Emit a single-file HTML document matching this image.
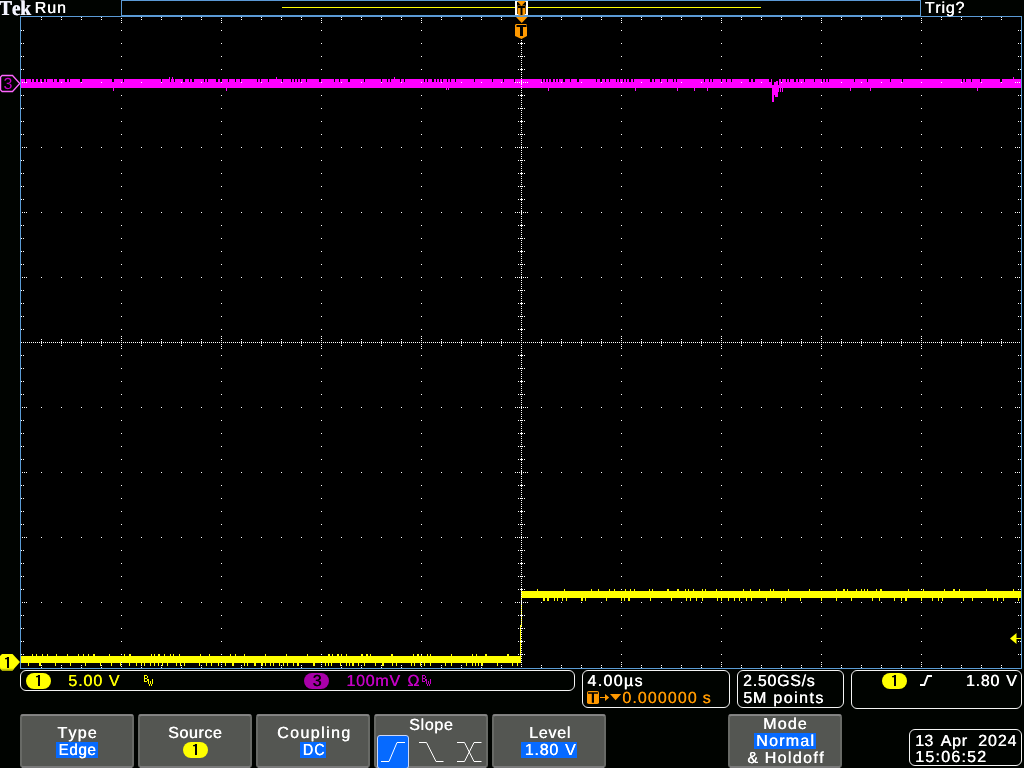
<!DOCTYPE html>
<html><head><meta charset="utf-8"><title>Tek</title>
<style>
html,body{margin:0;padding:0;background:#000300;width:1024px;height:768px;overflow:hidden}
svg{position:absolute;left:0;top:0;display:block}
#a{will-change:transform}
text{font-family:"Liberation Sans",sans-serif;font-kerning:none;white-space:pre;text-rendering:geometricPrecision}
</style></head><body>
<svg id="p" width="1024" height="768" viewBox="0 0 1024 768" shape-rendering="crispEdges">
<rect x="21" y="17" width="1000" height="651" fill="#000"/>
<rect x="21" y="82" width="1000" height="6" fill="#ff00ff"/>
<path fill="#ff00ff" d="M21 79h4v3h-4zM26 79h5v3h-5zM32 79h2v3h-2zM36 79h2v3h-2zM40 79h2v3h-2zM44 79h2v3h-2zM47 79h6v3h-6zM54 79h3v3h-3zM59 79h6v3h-6zM67 79h2v3h-2zM70 79h10v3h-10zM82 79h30v3h-30zM114 79h9v3h-9zM124 79h37v3h-37zM162 79h8v3h-8zM171 79h3v3h-3zM175 79h8v3h-8zM185 79h4v3h-4zM190 79h2v3h-2zM194 79h10v3h-10zM205 79h2v3h-2zM208 79h8v3h-8zM218 79h2v3h-2zM222 79h6v3h-6zM229 79h6v3h-6zM236 79h4v3h-4zM241 79h16v3h-16zM258 79h2v3h-2zM261 79h7v3h-7zM269 79h13v3h-13zM283 79h8v3h-8zM292 79h2v3h-2zM295 79h2v3h-2zM298 79h2v3h-2zM301 79h5v3h-5zM307 79h12v3h-12zM321 79h13v3h-13zM335 79h4v3h-4zM340 79h8v3h-8zM350 79h14v3h-14zM365 79h16v3h-16zM382 79h5v3h-5zM388 79h2v3h-2zM391 79h9v3h-9zM401 79h3v3h-3zM405 79h19v3h-19zM425 79h2v3h-2zM428 79h4v3h-4zM434 79h2v3h-2zM437 79h2v3h-2zM440 79h2v3h-2zM443 79h4v3h-4zM448 79h2v3h-2zM451 79h4v3h-4zM456 79h18v3h-18zM475 79h17v3h-17zM493 79h10v3h-10zM504 79h10v3h-10zM515 79h27v3h-27zM543 79h2v3h-2zM546 79h2v3h-2zM549 79h2v3h-2zM553 79h2v3h-2zM556 79h2v3h-2zM559 79h4v3h-4zM565 79h5v3h-5zM571 79h6v3h-6zM579 79h17v3h-17zM597 79h3v3h-3zM602 79h3v3h-3zM606 79h3v3h-3zM610 79h6v3h-6zM617 79h2v3h-2zM620 79h3v3h-3zM624 79h2v3h-2zM627 79h2v3h-2zM631 79h2v3h-2zM634 79h16v3h-16zM652 79h2v3h-2zM655 79h5v3h-5zM661 79h6v3h-6zM668 79h5v3h-5zM674 79h2v3h-2zM677 79h27v3h-27zM705 79h4v3h-4zM710 79h2v3h-2zM713 79h8v3h-8zM722 79h4v3h-4zM727 79h4v3h-4zM732 79h17v3h-17zM751 79h2v3h-2zM755 79h14v3h-14zM771 79h2v3h-2zM774 79h7v3h-7zM782 79h4v3h-4zM787 79h2v3h-2zM790 79h4v3h-4zM796 79h2v3h-2zM799 79h5v3h-5zM805 79h9v3h-9zM815 79h7v3h-7zM823 79h2v3h-2zM826 79h2v3h-2zM829 79h25v3h-25zM855 79h12v3h-12zM868 79h22v3h-22zM891 79h11v3h-11zM903 79h59v3h-59zM963 79h2v3h-2zM966 79h5v3h-5zM972 79h8v3h-8zM981 79h19v3h-19zM1002 79h19v3h-19z"/>
<rect x="169" y="77" width="1" height="2" fill="#ff00ff"/>
<rect x="172" y="77" width="1" height="2" fill="#ff00ff"/>
<rect x="276" y="77" width="1" height="2" fill="#ff00ff"/>
<rect x="394" y="77" width="1" height="2" fill="#ff00ff"/>
<rect x="1013" y="77" width="1" height="2" fill="#ff00ff"/>
<rect x="113" y="88" width="1" height="3" fill="#ff00ff"/>
<rect x="226" y="88" width="1" height="3" fill="#ff00ff"/>
<rect x="446" y="88" width="1" height="2" fill="#ff00ff"/>
<rect x="448" y="88" width="1" height="2" fill="#ff00ff"/>
<rect x="548" y="88" width="1" height="3" fill="#ff00ff"/>
<rect x="635" y="88" width="1" height="3" fill="#ff00ff"/>
<rect x="677" y="88" width="1" height="3" fill="#ff00ff"/>
<rect x="694" y="88" width="1" height="3" fill="#ff00ff"/>
<rect x="707" y="88" width="1" height="3" fill="#ff00ff"/>
<rect x="850" y="88" width="1" height="3" fill="#ff00ff"/>
<rect x="870" y="88" width="1" height="3" fill="#ff00ff"/>
<rect x="977" y="88" width="1" height="3" fill="#ff00ff"/>
<rect x="772" y="79" width="7" height="6" fill="#000"/>
<rect x="774" y="82" width="2" height="3" fill="#ff00ff"/>
<rect x="776" y="81" width="2" height="4" fill="#ff00ff"/>
<rect x="772" y="85" width="2" height="17" fill="#ff00ff"/>
<rect x="774" y="85" width="1" height="10" fill="#ff00ff"/>
<rect x="775" y="85" width="3" height="12" fill="#ff00ff"/>
<rect x="778" y="85" width="1" height="7" fill="#ff00ff"/>
<rect x="780" y="88" width="1" height="4" fill="#ff00ff"/>
<rect x="782" y="88" width="1" height="4" fill="#ff00ff"/>
<rect x="21" y="656" width="500" height="7" fill="#ffff00"/>
<rect x="521" y="591" width="500" height="7" fill="#ffff00"/>
<rect x="520" y="625" width="1" height="32" fill="#ffff00"/>
<rect x="521" y="598" width="1" height="28" fill="#ffff00"/>
<path fill="#ffff00" d="M32 654h1v2h-1zM36 654h1v2h-1zM42 654h1v2h-1zM47 654h1v2h-1zM56 654h1v2h-1zM67 654h1v2h-1zM78 654h1v2h-1zM83 654h1v2h-1zM88 654h1v2h-1zM93 654h2v2h-2zM109 654h1v2h-1zM124 654h1v2h-1zM129 654h2v2h-2zM151 654h1v2h-1zM154 654h1v2h-1zM158 654h2v2h-2zM164 654h1v2h-1zM170 654h1v2h-1zM173 654h1v2h-1zM179 654h1v2h-1zM200 654h1v2h-1zM209 654h1v2h-1zM230 654h1v2h-1zM235 654h1v2h-1zM244 654h1v2h-1zM265 654h1v2h-1zM286 654h1v2h-1zM307 654h1v2h-1zM328 654h2v2h-2zM332 654h1v2h-1zM337 654h2v2h-2zM341 654h1v2h-1zM346 654h1v2h-1zM361 654h2v2h-2zM366 654h2v2h-2zM370 654h1v2h-1zM391 654h2v2h-2zM413 654h1v2h-1zM417 654h2v2h-2zM421 654h1v2h-1zM427 654h1v2h-1zM430 654h1v2h-1zM451 654h1v2h-1zM472 654h1v2h-1zM476 654h1v2h-1zM485 654h2v2h-2zM507 654h2v2h-2z"/>
<path fill="#ffff00" d="M28 663h1v3h-1zM39 663h2v3h-2zM55 663h1v3h-1zM70 663h1v3h-1zM85 663h1v3h-1zM100 663h1v3h-1zM111 663h1v3h-1zM120 663h1v3h-1zM129 663h1v3h-1zM136 663h1v3h-1zM141 663h1v3h-1zM144 663h1v3h-1zM150 663h1v3h-1zM154 663h1v3h-1zM158 663h1v3h-1zM162 663h1v3h-1zM167 663h1v3h-1zM176 663h1v3h-1zM180 663h1v3h-1zM184 663h1v3h-1zM199 663h1v3h-1zM206 663h1v3h-1zM211 663h1v3h-1zM218 663h1v3h-1zM225 663h1v3h-1zM232 663h2v3h-2zM244 663h1v3h-1zM247 663h1v3h-1zM254 663h2v3h-2zM261 663h2v3h-2zM265 663h1v3h-1zM270 663h1v3h-1zM273 663h1v3h-1zM279 663h1v3h-1zM283 663h1v3h-1zM287 663h1v3h-1zM293 663h1v3h-1zM297 663h2v3h-2zM313 663h2v3h-2zM325 663h1v3h-1zM328 663h1v3h-1zM331 663h1v3h-1zM340 663h1v3h-1zM346 663h1v3h-1zM349 663h1v3h-1zM352 663h2v3h-2zM358 663h1v3h-1zM364 663h1v3h-1zM375 663h1v3h-1zM382 663h2v3h-2zM392 663h1v3h-1zM396 663h1v3h-1zM411 663h1v3h-1zM414 663h1v3h-1zM420 663h1v3h-1zM424 663h1v3h-1zM430 663h1v3h-1zM445 663h1v3h-1zM451 663h1v3h-1zM466 663h1v3h-1zM472 663h1v3h-1zM475 663h1v3h-1zM478 663h1v3h-1zM481 663h2v3h-2zM497 663h1v3h-1zM512 663h1v3h-1zM517 663h1v3h-1z"/>
<path fill="#ffff00" d="M537 589h1v2h-1zM564 589h1v2h-1zM591 589h1v2h-1zM598 589h1v2h-1zM609 589h1v2h-1zM614 589h1v2h-1zM625 589h1v2h-1zM630 589h1v2h-1zM634 589h1v2h-1zM649 589h1v2h-1zM652 589h1v2h-1zM667 589h2v2h-2zM677 589h2v2h-2zM685 589h1v2h-1zM688 589h1v2h-1zM693 589h1v2h-1zM702 589h1v2h-1zM705 589h1v2h-1zM716 589h1v2h-1zM743 589h1v2h-1zM750 589h1v2h-1zM759 589h1v2h-1zM770 589h1v2h-1zM773 589h1v2h-1zM788 589h1v2h-1zM809 589h1v2h-1zM836 589h1v2h-1zM843 589h2v2h-2zM847 589h1v2h-1zM856 589h1v2h-1zM861 589h1v2h-1zM864 589h1v2h-1zM867 589h1v2h-1zM876 589h1v2h-1zM880 589h2v2h-2zM908 589h1v2h-1zM923 589h1v2h-1zM944 589h1v2h-1zM953 589h2v2h-2zM959 589h1v2h-1zM986 589h1v2h-1zM1013 589h1v2h-1z"/>
<path fill="#ffff00" d="M543 598h2v3h-2zM547 598h2v3h-2zM554 598h1v3h-1zM557 598h1v3h-1zM562 598h1v3h-1zM566 598h1v3h-1zM581 598h2v3h-2zM585 598h1v3h-1zM606 598h1v3h-1zM621 598h1v3h-1zM624 598h1v3h-1zM628 598h2v3h-2zM650 598h1v3h-1zM671 598h1v3h-1zM686 598h1v3h-1zM690 598h1v3h-1zM696 598h1v3h-1zM702 598h1v3h-1zM717 598h1v3h-1zM721 598h1v3h-1zM728 598h1v3h-1zM734 598h1v3h-1zM739 598h1v3h-1zM746 598h1v3h-1zM751 598h1v3h-1zM766 598h1v3h-1zM781 598h1v3h-1zM785 598h1v3h-1zM800 598h1v3h-1zM821 598h1v3h-1zM836 598h1v3h-1zM851 598h1v3h-1zM872 598h1v3h-1zM879 598h1v3h-1zM894 598h1v3h-1zM901 598h1v3h-1zM905 598h2v3h-2zM921 598h1v3h-1zM932 598h1v3h-1zM938 598h1v3h-1zM942 598h1v3h-1zM963 598h1v3h-1zM972 598h1v3h-1zM993 598h1v3h-1zM997 598h1v3h-1zM1003 598h1v3h-1zM1018 598h1v3h-1z"/>
<path fill="#ffffff" d="M41 82h1v1h-1zM61 82h1v1h-1zM81 82h1v1h-1zM101 82h1v1h-1zM121 82h1v1h-1zM141 82h1v1h-1zM161 82h1v1h-1zM181 82h1v1h-1zM201 82h1v1h-1zM221 82h1v1h-1zM241 82h1v1h-1zM261 82h1v1h-1zM281 82h1v1h-1zM301 82h1v1h-1zM321 82h1v1h-1zM341 82h1v1h-1zM361 82h1v1h-1zM381 82h1v1h-1zM401 82h1v1h-1zM421 82h1v1h-1zM441 82h1v1h-1zM461 82h1v1h-1zM481 82h1v1h-1zM501 82h1v1h-1zM541 82h1v1h-1zM561 82h1v1h-1zM581 82h1v1h-1zM601 82h1v1h-1zM621 82h1v1h-1zM641 82h1v1h-1zM661 82h1v1h-1zM681 82h1v1h-1zM701 82h1v1h-1zM721 82h1v1h-1zM741 82h1v1h-1zM761 82h1v1h-1zM781 82h1v1h-1zM801 82h1v1h-1zM821 82h1v1h-1zM841 82h1v1h-1zM861 82h1v1h-1zM881 82h1v1h-1zM901 82h1v1h-1zM921 82h1v1h-1zM941 82h1v1h-1zM961 82h1v1h-1zM981 82h1v1h-1zM1001 82h1v1h-1zM22 82h1v1h-1zM24 82h1v1h-1zM26 82h1v1h-1zM1015 82h1v1h-1zM1017 82h1v1h-1zM1019 82h1v1h-1zM41 147h1v1h-1zM61 147h1v1h-1zM81 147h1v1h-1zM101 147h1v1h-1zM121 147h1v1h-1zM141 147h1v1h-1zM161 147h1v1h-1zM181 147h1v1h-1zM201 147h1v1h-1zM221 147h1v1h-1zM241 147h1v1h-1zM261 147h1v1h-1zM281 147h1v1h-1zM301 147h1v1h-1zM321 147h1v1h-1zM341 147h1v1h-1zM361 147h1v1h-1zM381 147h1v1h-1zM401 147h1v1h-1zM421 147h1v1h-1zM441 147h1v1h-1zM461 147h1v1h-1zM481 147h1v1h-1zM501 147h1v1h-1zM541 147h1v1h-1zM561 147h1v1h-1zM581 147h1v1h-1zM601 147h1v1h-1zM621 147h1v1h-1zM641 147h1v1h-1zM661 147h1v1h-1zM681 147h1v1h-1zM701 147h1v1h-1zM721 147h1v1h-1zM741 147h1v1h-1zM761 147h1v1h-1zM781 147h1v1h-1zM801 147h1v1h-1zM821 147h1v1h-1zM841 147h1v1h-1zM861 147h1v1h-1zM881 147h1v1h-1zM901 147h1v1h-1zM921 147h1v1h-1zM941 147h1v1h-1zM961 147h1v1h-1zM981 147h1v1h-1zM1001 147h1v1h-1zM22 147h1v1h-1zM24 147h1v1h-1zM26 147h1v1h-1zM1015 147h1v1h-1zM1017 147h1v1h-1zM1019 147h1v1h-1zM41 212h1v1h-1zM61 212h1v1h-1zM81 212h1v1h-1zM101 212h1v1h-1zM121 212h1v1h-1zM141 212h1v1h-1zM161 212h1v1h-1zM181 212h1v1h-1zM201 212h1v1h-1zM221 212h1v1h-1zM241 212h1v1h-1zM261 212h1v1h-1zM281 212h1v1h-1zM301 212h1v1h-1zM321 212h1v1h-1zM341 212h1v1h-1zM361 212h1v1h-1zM381 212h1v1h-1zM401 212h1v1h-1zM421 212h1v1h-1zM441 212h1v1h-1zM461 212h1v1h-1zM481 212h1v1h-1zM501 212h1v1h-1zM541 212h1v1h-1zM561 212h1v1h-1zM581 212h1v1h-1zM601 212h1v1h-1zM621 212h1v1h-1zM641 212h1v1h-1zM661 212h1v1h-1zM681 212h1v1h-1zM701 212h1v1h-1zM721 212h1v1h-1zM741 212h1v1h-1zM761 212h1v1h-1zM781 212h1v1h-1zM801 212h1v1h-1zM821 212h1v1h-1zM841 212h1v1h-1zM861 212h1v1h-1zM881 212h1v1h-1zM901 212h1v1h-1zM921 212h1v1h-1zM941 212h1v1h-1zM961 212h1v1h-1zM981 212h1v1h-1zM1001 212h1v1h-1zM22 212h1v1h-1zM24 212h1v1h-1zM26 212h1v1h-1zM1015 212h1v1h-1zM1017 212h1v1h-1zM1019 212h1v1h-1zM41 277h1v1h-1zM61 277h1v1h-1zM81 277h1v1h-1zM101 277h1v1h-1zM121 277h1v1h-1zM141 277h1v1h-1zM161 277h1v1h-1zM181 277h1v1h-1zM201 277h1v1h-1zM221 277h1v1h-1zM241 277h1v1h-1zM261 277h1v1h-1zM281 277h1v1h-1zM301 277h1v1h-1zM321 277h1v1h-1zM341 277h1v1h-1zM361 277h1v1h-1zM381 277h1v1h-1zM401 277h1v1h-1zM421 277h1v1h-1zM441 277h1v1h-1zM461 277h1v1h-1zM481 277h1v1h-1zM501 277h1v1h-1zM541 277h1v1h-1zM561 277h1v1h-1zM581 277h1v1h-1zM601 277h1v1h-1zM621 277h1v1h-1zM641 277h1v1h-1zM661 277h1v1h-1zM681 277h1v1h-1zM701 277h1v1h-1zM721 277h1v1h-1zM741 277h1v1h-1zM761 277h1v1h-1zM781 277h1v1h-1zM801 277h1v1h-1zM821 277h1v1h-1zM841 277h1v1h-1zM861 277h1v1h-1zM881 277h1v1h-1zM901 277h1v1h-1zM921 277h1v1h-1zM941 277h1v1h-1zM961 277h1v1h-1zM981 277h1v1h-1zM1001 277h1v1h-1zM22 277h1v1h-1zM24 277h1v1h-1zM26 277h1v1h-1zM1015 277h1v1h-1zM1017 277h1v1h-1zM1019 277h1v1h-1zM41 407h1v1h-1zM61 407h1v1h-1zM81 407h1v1h-1zM101 407h1v1h-1zM121 407h1v1h-1zM141 407h1v1h-1zM161 407h1v1h-1zM181 407h1v1h-1zM201 407h1v1h-1zM221 407h1v1h-1zM241 407h1v1h-1zM261 407h1v1h-1zM281 407h1v1h-1zM301 407h1v1h-1zM321 407h1v1h-1zM341 407h1v1h-1zM361 407h1v1h-1zM381 407h1v1h-1zM401 407h1v1h-1zM421 407h1v1h-1zM441 407h1v1h-1zM461 407h1v1h-1zM481 407h1v1h-1zM501 407h1v1h-1zM541 407h1v1h-1zM561 407h1v1h-1zM581 407h1v1h-1zM601 407h1v1h-1zM621 407h1v1h-1zM641 407h1v1h-1zM661 407h1v1h-1zM681 407h1v1h-1zM701 407h1v1h-1zM721 407h1v1h-1zM741 407h1v1h-1zM761 407h1v1h-1zM781 407h1v1h-1zM801 407h1v1h-1zM821 407h1v1h-1zM841 407h1v1h-1zM861 407h1v1h-1zM881 407h1v1h-1zM901 407h1v1h-1zM921 407h1v1h-1zM941 407h1v1h-1zM961 407h1v1h-1zM981 407h1v1h-1zM1001 407h1v1h-1zM22 407h1v1h-1zM24 407h1v1h-1zM26 407h1v1h-1zM1015 407h1v1h-1zM1017 407h1v1h-1zM1019 407h1v1h-1zM41 472h1v1h-1zM61 472h1v1h-1zM81 472h1v1h-1zM101 472h1v1h-1zM121 472h1v1h-1zM141 472h1v1h-1zM161 472h1v1h-1zM181 472h1v1h-1zM201 472h1v1h-1zM221 472h1v1h-1zM241 472h1v1h-1zM261 472h1v1h-1zM281 472h1v1h-1zM301 472h1v1h-1zM321 472h1v1h-1zM341 472h1v1h-1zM361 472h1v1h-1zM381 472h1v1h-1zM401 472h1v1h-1zM421 472h1v1h-1zM441 472h1v1h-1zM461 472h1v1h-1zM481 472h1v1h-1zM501 472h1v1h-1zM541 472h1v1h-1zM561 472h1v1h-1zM581 472h1v1h-1zM601 472h1v1h-1zM621 472h1v1h-1zM641 472h1v1h-1zM661 472h1v1h-1zM681 472h1v1h-1zM701 472h1v1h-1zM721 472h1v1h-1zM741 472h1v1h-1zM761 472h1v1h-1zM781 472h1v1h-1zM801 472h1v1h-1zM821 472h1v1h-1zM841 472h1v1h-1zM861 472h1v1h-1zM881 472h1v1h-1zM901 472h1v1h-1zM921 472h1v1h-1zM941 472h1v1h-1zM961 472h1v1h-1zM981 472h1v1h-1zM1001 472h1v1h-1zM22 472h1v1h-1zM24 472h1v1h-1zM26 472h1v1h-1zM1015 472h1v1h-1zM1017 472h1v1h-1zM1019 472h1v1h-1zM41 537h1v1h-1zM61 537h1v1h-1zM81 537h1v1h-1zM101 537h1v1h-1zM121 537h1v1h-1zM141 537h1v1h-1zM161 537h1v1h-1zM181 537h1v1h-1zM201 537h1v1h-1zM221 537h1v1h-1zM241 537h1v1h-1zM261 537h1v1h-1zM281 537h1v1h-1zM301 537h1v1h-1zM321 537h1v1h-1zM341 537h1v1h-1zM361 537h1v1h-1zM381 537h1v1h-1zM401 537h1v1h-1zM421 537h1v1h-1zM441 537h1v1h-1zM461 537h1v1h-1zM481 537h1v1h-1zM501 537h1v1h-1zM541 537h1v1h-1zM561 537h1v1h-1zM581 537h1v1h-1zM601 537h1v1h-1zM621 537h1v1h-1zM641 537h1v1h-1zM661 537h1v1h-1zM681 537h1v1h-1zM701 537h1v1h-1zM721 537h1v1h-1zM741 537h1v1h-1zM761 537h1v1h-1zM781 537h1v1h-1zM801 537h1v1h-1zM821 537h1v1h-1zM841 537h1v1h-1zM861 537h1v1h-1zM881 537h1v1h-1zM901 537h1v1h-1zM921 537h1v1h-1zM941 537h1v1h-1zM961 537h1v1h-1zM981 537h1v1h-1zM1001 537h1v1h-1zM22 537h1v1h-1zM24 537h1v1h-1zM26 537h1v1h-1zM1015 537h1v1h-1zM1017 537h1v1h-1zM1019 537h1v1h-1zM41 602h1v1h-1zM61 602h1v1h-1zM81 602h1v1h-1zM101 602h1v1h-1zM121 602h1v1h-1zM141 602h1v1h-1zM161 602h1v1h-1zM181 602h1v1h-1zM201 602h1v1h-1zM221 602h1v1h-1zM241 602h1v1h-1zM261 602h1v1h-1zM281 602h1v1h-1zM301 602h1v1h-1zM321 602h1v1h-1zM341 602h1v1h-1zM361 602h1v1h-1zM381 602h1v1h-1zM401 602h1v1h-1zM421 602h1v1h-1zM441 602h1v1h-1zM461 602h1v1h-1zM481 602h1v1h-1zM501 602h1v1h-1zM541 602h1v1h-1zM561 602h1v1h-1zM581 602h1v1h-1zM601 602h1v1h-1zM621 602h1v1h-1zM641 602h1v1h-1zM661 602h1v1h-1zM681 602h1v1h-1zM701 602h1v1h-1zM721 602h1v1h-1zM741 602h1v1h-1zM761 602h1v1h-1zM781 602h1v1h-1zM801 602h1v1h-1zM821 602h1v1h-1zM841 602h1v1h-1zM861 602h1v1h-1zM881 602h1v1h-1zM901 602h1v1h-1zM921 602h1v1h-1zM941 602h1v1h-1zM961 602h1v1h-1zM981 602h1v1h-1zM1001 602h1v1h-1zM22 602h1v1h-1zM24 602h1v1h-1zM26 602h1v1h-1zM1015 602h1v1h-1zM1017 602h1v1h-1zM1019 602h1v1h-1zM121 30h1v1h-1zM121 43h1v1h-1zM121 56h1v1h-1zM121 69h1v1h-1zM121 82h1v1h-1zM121 95h1v1h-1zM121 108h1v1h-1zM121 121h1v1h-1zM121 134h1v1h-1zM121 147h1v1h-1zM121 160h1v1h-1zM121 173h1v1h-1zM121 186h1v1h-1zM121 199h1v1h-1zM121 212h1v1h-1zM121 225h1v1h-1zM121 238h1v1h-1zM121 251h1v1h-1zM121 264h1v1h-1zM121 277h1v1h-1zM121 290h1v1h-1zM121 303h1v1h-1zM121 316h1v1h-1zM121 329h1v1h-1zM121 355h1v1h-1zM121 368h1v1h-1zM121 381h1v1h-1zM121 394h1v1h-1zM121 407h1v1h-1zM121 420h1v1h-1zM121 433h1v1h-1zM121 446h1v1h-1zM121 459h1v1h-1zM121 472h1v1h-1zM121 485h1v1h-1zM121 498h1v1h-1zM121 511h1v1h-1zM121 524h1v1h-1zM121 537h1v1h-1zM121 550h1v1h-1zM121 563h1v1h-1zM121 576h1v1h-1zM121 589h1v1h-1zM121 602h1v1h-1zM121 615h1v1h-1zM121 628h1v1h-1zM121 641h1v1h-1zM121 654h1v1h-1zM121 18h1v1h-1zM121 20h1v1h-1zM121 22h1v1h-1zM121 662h1v1h-1zM121 664h1v1h-1zM121 666h1v1h-1zM221 30h1v1h-1zM221 43h1v1h-1zM221 56h1v1h-1zM221 69h1v1h-1zM221 82h1v1h-1zM221 95h1v1h-1zM221 108h1v1h-1zM221 121h1v1h-1zM221 134h1v1h-1zM221 147h1v1h-1zM221 160h1v1h-1zM221 173h1v1h-1zM221 186h1v1h-1zM221 199h1v1h-1zM221 212h1v1h-1zM221 225h1v1h-1zM221 238h1v1h-1zM221 251h1v1h-1zM221 264h1v1h-1zM221 277h1v1h-1zM221 290h1v1h-1zM221 303h1v1h-1zM221 316h1v1h-1zM221 329h1v1h-1zM221 355h1v1h-1zM221 368h1v1h-1zM221 381h1v1h-1zM221 394h1v1h-1zM221 407h1v1h-1zM221 420h1v1h-1zM221 433h1v1h-1zM221 446h1v1h-1zM221 459h1v1h-1zM221 472h1v1h-1zM221 485h1v1h-1zM221 498h1v1h-1zM221 511h1v1h-1zM221 524h1v1h-1zM221 537h1v1h-1zM221 550h1v1h-1zM221 563h1v1h-1zM221 576h1v1h-1zM221 589h1v1h-1zM221 602h1v1h-1zM221 615h1v1h-1zM221 628h1v1h-1zM221 641h1v1h-1zM221 654h1v1h-1zM221 18h1v1h-1zM221 20h1v1h-1zM221 22h1v1h-1zM221 662h1v1h-1zM221 664h1v1h-1zM221 666h1v1h-1zM321 30h1v1h-1zM321 43h1v1h-1zM321 56h1v1h-1zM321 69h1v1h-1zM321 82h1v1h-1zM321 95h1v1h-1zM321 108h1v1h-1zM321 121h1v1h-1zM321 134h1v1h-1zM321 147h1v1h-1zM321 160h1v1h-1zM321 173h1v1h-1zM321 186h1v1h-1zM321 199h1v1h-1zM321 212h1v1h-1zM321 225h1v1h-1zM321 238h1v1h-1zM321 251h1v1h-1zM321 264h1v1h-1zM321 277h1v1h-1zM321 290h1v1h-1zM321 303h1v1h-1zM321 316h1v1h-1zM321 329h1v1h-1zM321 355h1v1h-1zM321 368h1v1h-1zM321 381h1v1h-1zM321 394h1v1h-1zM321 407h1v1h-1zM321 420h1v1h-1zM321 433h1v1h-1zM321 446h1v1h-1zM321 459h1v1h-1zM321 472h1v1h-1zM321 485h1v1h-1zM321 498h1v1h-1zM321 511h1v1h-1zM321 524h1v1h-1zM321 537h1v1h-1zM321 550h1v1h-1zM321 563h1v1h-1zM321 576h1v1h-1zM321 589h1v1h-1zM321 602h1v1h-1zM321 615h1v1h-1zM321 628h1v1h-1zM321 641h1v1h-1zM321 654h1v1h-1zM321 18h1v1h-1zM321 20h1v1h-1zM321 22h1v1h-1zM321 662h1v1h-1zM321 664h1v1h-1zM321 666h1v1h-1zM421 30h1v1h-1zM421 43h1v1h-1zM421 56h1v1h-1zM421 69h1v1h-1zM421 82h1v1h-1zM421 95h1v1h-1zM421 108h1v1h-1zM421 121h1v1h-1zM421 134h1v1h-1zM421 147h1v1h-1zM421 160h1v1h-1zM421 173h1v1h-1zM421 186h1v1h-1zM421 199h1v1h-1zM421 212h1v1h-1zM421 225h1v1h-1zM421 238h1v1h-1zM421 251h1v1h-1zM421 264h1v1h-1zM421 277h1v1h-1zM421 290h1v1h-1zM421 303h1v1h-1zM421 316h1v1h-1zM421 329h1v1h-1zM421 355h1v1h-1zM421 368h1v1h-1zM421 381h1v1h-1zM421 394h1v1h-1zM421 407h1v1h-1zM421 420h1v1h-1zM421 433h1v1h-1zM421 446h1v1h-1zM421 459h1v1h-1zM421 472h1v1h-1zM421 485h1v1h-1zM421 498h1v1h-1zM421 511h1v1h-1zM421 524h1v1h-1zM421 537h1v1h-1zM421 550h1v1h-1zM421 563h1v1h-1zM421 576h1v1h-1zM421 589h1v1h-1zM421 602h1v1h-1zM421 615h1v1h-1zM421 628h1v1h-1zM421 641h1v1h-1zM421 654h1v1h-1zM421 18h1v1h-1zM421 20h1v1h-1zM421 22h1v1h-1zM421 662h1v1h-1zM421 664h1v1h-1zM421 666h1v1h-1zM621 30h1v1h-1zM621 43h1v1h-1zM621 56h1v1h-1zM621 69h1v1h-1zM621 82h1v1h-1zM621 95h1v1h-1zM621 108h1v1h-1zM621 121h1v1h-1zM621 134h1v1h-1zM621 147h1v1h-1zM621 160h1v1h-1zM621 173h1v1h-1zM621 186h1v1h-1zM621 199h1v1h-1zM621 212h1v1h-1zM621 225h1v1h-1zM621 238h1v1h-1zM621 251h1v1h-1zM621 264h1v1h-1zM621 277h1v1h-1zM621 290h1v1h-1zM621 303h1v1h-1zM621 316h1v1h-1zM621 329h1v1h-1zM621 355h1v1h-1zM621 368h1v1h-1zM621 381h1v1h-1zM621 394h1v1h-1zM621 407h1v1h-1zM621 420h1v1h-1zM621 433h1v1h-1zM621 446h1v1h-1zM621 459h1v1h-1zM621 472h1v1h-1zM621 485h1v1h-1zM621 498h1v1h-1zM621 511h1v1h-1zM621 524h1v1h-1zM621 537h1v1h-1zM621 550h1v1h-1zM621 563h1v1h-1zM621 576h1v1h-1zM621 589h1v1h-1zM621 602h1v1h-1zM621 615h1v1h-1zM621 628h1v1h-1zM621 641h1v1h-1zM621 654h1v1h-1zM621 18h1v1h-1zM621 20h1v1h-1zM621 22h1v1h-1zM621 662h1v1h-1zM621 664h1v1h-1zM621 666h1v1h-1zM721 30h1v1h-1zM721 43h1v1h-1zM721 56h1v1h-1zM721 69h1v1h-1zM721 82h1v1h-1zM721 95h1v1h-1zM721 108h1v1h-1zM721 121h1v1h-1zM721 134h1v1h-1zM721 147h1v1h-1zM721 160h1v1h-1zM721 173h1v1h-1zM721 186h1v1h-1zM721 199h1v1h-1zM721 212h1v1h-1zM721 225h1v1h-1zM721 238h1v1h-1zM721 251h1v1h-1zM721 264h1v1h-1zM721 277h1v1h-1zM721 290h1v1h-1zM721 303h1v1h-1zM721 316h1v1h-1zM721 329h1v1h-1zM721 355h1v1h-1zM721 368h1v1h-1zM721 381h1v1h-1zM721 394h1v1h-1zM721 407h1v1h-1zM721 420h1v1h-1zM721 433h1v1h-1zM721 446h1v1h-1zM721 459h1v1h-1zM721 472h1v1h-1zM721 485h1v1h-1zM721 498h1v1h-1zM721 511h1v1h-1zM721 524h1v1h-1zM721 537h1v1h-1zM721 550h1v1h-1zM721 563h1v1h-1zM721 576h1v1h-1zM721 589h1v1h-1zM721 602h1v1h-1zM721 615h1v1h-1zM721 628h1v1h-1zM721 641h1v1h-1zM721 654h1v1h-1zM721 18h1v1h-1zM721 20h1v1h-1zM721 22h1v1h-1zM721 662h1v1h-1zM721 664h1v1h-1zM721 666h1v1h-1zM821 30h1v1h-1zM821 43h1v1h-1zM821 56h1v1h-1zM821 69h1v1h-1zM821 82h1v1h-1zM821 95h1v1h-1zM821 108h1v1h-1zM821 121h1v1h-1zM821 134h1v1h-1zM821 147h1v1h-1zM821 160h1v1h-1zM821 173h1v1h-1zM821 186h1v1h-1zM821 199h1v1h-1zM821 212h1v1h-1zM821 225h1v1h-1zM821 238h1v1h-1zM821 251h1v1h-1zM821 264h1v1h-1zM821 277h1v1h-1zM821 290h1v1h-1zM821 303h1v1h-1zM821 316h1v1h-1zM821 329h1v1h-1zM821 355h1v1h-1zM821 368h1v1h-1zM821 381h1v1h-1zM821 394h1v1h-1zM821 407h1v1h-1zM821 420h1v1h-1zM821 433h1v1h-1zM821 446h1v1h-1zM821 459h1v1h-1zM821 472h1v1h-1zM821 485h1v1h-1zM821 498h1v1h-1zM821 511h1v1h-1zM821 524h1v1h-1zM821 537h1v1h-1zM821 550h1v1h-1zM821 563h1v1h-1zM821 576h1v1h-1zM821 589h1v1h-1zM821 602h1v1h-1zM821 615h1v1h-1zM821 628h1v1h-1zM821 641h1v1h-1zM821 654h1v1h-1zM821 18h1v1h-1zM821 20h1v1h-1zM821 22h1v1h-1zM821 662h1v1h-1zM821 664h1v1h-1zM821 666h1v1h-1zM921 30h1v1h-1zM921 43h1v1h-1zM921 56h1v1h-1zM921 69h1v1h-1zM921 82h1v1h-1zM921 95h1v1h-1zM921 108h1v1h-1zM921 121h1v1h-1zM921 134h1v1h-1zM921 147h1v1h-1zM921 160h1v1h-1zM921 173h1v1h-1zM921 186h1v1h-1zM921 199h1v1h-1zM921 212h1v1h-1zM921 225h1v1h-1zM921 238h1v1h-1zM921 251h1v1h-1zM921 264h1v1h-1zM921 277h1v1h-1zM921 290h1v1h-1zM921 303h1v1h-1zM921 316h1v1h-1zM921 329h1v1h-1zM921 355h1v1h-1zM921 368h1v1h-1zM921 381h1v1h-1zM921 394h1v1h-1zM921 407h1v1h-1zM921 420h1v1h-1zM921 433h1v1h-1zM921 446h1v1h-1zM921 459h1v1h-1zM921 472h1v1h-1zM921 485h1v1h-1zM921 498h1v1h-1zM921 511h1v1h-1zM921 524h1v1h-1zM921 537h1v1h-1zM921 550h1v1h-1zM921 563h1v1h-1zM921 576h1v1h-1zM921 589h1v1h-1zM921 602h1v1h-1zM921 615h1v1h-1zM921 628h1v1h-1zM921 641h1v1h-1zM921 654h1v1h-1zM921 18h1v1h-1zM921 20h1v1h-1zM921 22h1v1h-1zM921 662h1v1h-1zM921 664h1v1h-1zM921 666h1v1h-1zM41 17h1v1h-1zM41 19h1v1h-1zM41 665h1v1h-1zM41 667h1v1h-1zM61 17h1v1h-1zM61 19h1v1h-1zM61 665h1v1h-1zM61 667h1v1h-1zM81 17h1v1h-1zM81 19h1v1h-1zM81 665h1v1h-1zM81 667h1v1h-1zM101 17h1v1h-1zM101 19h1v1h-1zM101 665h1v1h-1zM101 667h1v1h-1zM141 17h1v1h-1zM141 19h1v1h-1zM141 665h1v1h-1zM141 667h1v1h-1zM161 17h1v1h-1zM161 19h1v1h-1zM161 665h1v1h-1zM161 667h1v1h-1zM181 17h1v1h-1zM181 19h1v1h-1zM181 665h1v1h-1zM181 667h1v1h-1zM201 17h1v1h-1zM201 19h1v1h-1zM201 665h1v1h-1zM201 667h1v1h-1zM241 17h1v1h-1zM241 19h1v1h-1zM241 665h1v1h-1zM241 667h1v1h-1zM261 17h1v1h-1zM261 19h1v1h-1zM261 665h1v1h-1zM261 667h1v1h-1zM281 17h1v1h-1zM281 19h1v1h-1zM281 665h1v1h-1zM281 667h1v1h-1zM301 17h1v1h-1zM301 19h1v1h-1zM301 665h1v1h-1zM301 667h1v1h-1zM341 17h1v1h-1zM341 19h1v1h-1zM341 665h1v1h-1zM341 667h1v1h-1zM361 17h1v1h-1zM361 19h1v1h-1zM361 665h1v1h-1zM361 667h1v1h-1zM381 17h1v1h-1zM381 19h1v1h-1zM381 665h1v1h-1zM381 667h1v1h-1zM401 17h1v1h-1zM401 19h1v1h-1zM401 665h1v1h-1zM401 667h1v1h-1zM441 17h1v1h-1zM441 19h1v1h-1zM441 665h1v1h-1zM441 667h1v1h-1zM461 17h1v1h-1zM461 19h1v1h-1zM461 665h1v1h-1zM461 667h1v1h-1zM481 17h1v1h-1zM481 19h1v1h-1zM481 665h1v1h-1zM481 667h1v1h-1zM501 17h1v1h-1zM501 19h1v1h-1zM501 665h1v1h-1zM501 667h1v1h-1zM541 17h1v1h-1zM541 19h1v1h-1zM541 665h1v1h-1zM541 667h1v1h-1zM561 17h1v1h-1zM561 19h1v1h-1zM561 665h1v1h-1zM561 667h1v1h-1zM581 17h1v1h-1zM581 19h1v1h-1zM581 665h1v1h-1zM581 667h1v1h-1zM601 17h1v1h-1zM601 19h1v1h-1zM601 665h1v1h-1zM601 667h1v1h-1zM641 17h1v1h-1zM641 19h1v1h-1zM641 665h1v1h-1zM641 667h1v1h-1zM661 17h1v1h-1zM661 19h1v1h-1zM661 665h1v1h-1zM661 667h1v1h-1zM681 17h1v1h-1zM681 19h1v1h-1zM681 665h1v1h-1zM681 667h1v1h-1zM701 17h1v1h-1zM701 19h1v1h-1zM701 665h1v1h-1zM701 667h1v1h-1zM741 17h1v1h-1zM741 19h1v1h-1zM741 665h1v1h-1zM741 667h1v1h-1zM761 17h1v1h-1zM761 19h1v1h-1zM761 665h1v1h-1zM761 667h1v1h-1zM781 17h1v1h-1zM781 19h1v1h-1zM781 665h1v1h-1zM781 667h1v1h-1zM801 17h1v1h-1zM801 19h1v1h-1zM801 665h1v1h-1zM801 667h1v1h-1zM841 17h1v1h-1zM841 19h1v1h-1zM841 665h1v1h-1zM841 667h1v1h-1zM861 17h1v1h-1zM861 19h1v1h-1zM861 665h1v1h-1zM861 667h1v1h-1zM881 17h1v1h-1zM881 19h1v1h-1zM881 665h1v1h-1zM881 667h1v1h-1zM901 17h1v1h-1zM901 19h1v1h-1zM901 665h1v1h-1zM901 667h1v1h-1zM941 17h1v1h-1zM941 19h1v1h-1zM941 665h1v1h-1zM941 667h1v1h-1zM961 17h1v1h-1zM961 19h1v1h-1zM961 665h1v1h-1zM961 667h1v1h-1zM981 17h1v1h-1zM981 19h1v1h-1zM981 665h1v1h-1zM981 667h1v1h-1zM1001 17h1v1h-1zM1001 19h1v1h-1zM1001 665h1v1h-1zM1001 667h1v1h-1zM21 30h1v1h-1zM23 30h1v1h-1zM1018 30h1v1h-1zM1020 30h1v1h-1zM21 43h1v1h-1zM23 43h1v1h-1zM1018 43h1v1h-1zM1020 43h1v1h-1zM21 56h1v1h-1zM23 56h1v1h-1zM1018 56h1v1h-1zM1020 56h1v1h-1zM21 69h1v1h-1zM23 69h1v1h-1zM1018 69h1v1h-1zM1020 69h1v1h-1zM21 95h1v1h-1zM23 95h1v1h-1zM1018 95h1v1h-1zM1020 95h1v1h-1zM21 108h1v1h-1zM23 108h1v1h-1zM1018 108h1v1h-1zM1020 108h1v1h-1zM21 121h1v1h-1zM23 121h1v1h-1zM1018 121h1v1h-1zM1020 121h1v1h-1zM21 134h1v1h-1zM23 134h1v1h-1zM1018 134h1v1h-1zM1020 134h1v1h-1zM21 160h1v1h-1zM23 160h1v1h-1zM1018 160h1v1h-1zM1020 160h1v1h-1zM21 173h1v1h-1zM23 173h1v1h-1zM1018 173h1v1h-1zM1020 173h1v1h-1zM21 186h1v1h-1zM23 186h1v1h-1zM1018 186h1v1h-1zM1020 186h1v1h-1zM21 199h1v1h-1zM23 199h1v1h-1zM1018 199h1v1h-1zM1020 199h1v1h-1zM21 225h1v1h-1zM23 225h1v1h-1zM1018 225h1v1h-1zM1020 225h1v1h-1zM21 238h1v1h-1zM23 238h1v1h-1zM1018 238h1v1h-1zM1020 238h1v1h-1zM21 251h1v1h-1zM23 251h1v1h-1zM1018 251h1v1h-1zM1020 251h1v1h-1zM21 264h1v1h-1zM23 264h1v1h-1zM1018 264h1v1h-1zM1020 264h1v1h-1zM21 290h1v1h-1zM23 290h1v1h-1zM1018 290h1v1h-1zM1020 290h1v1h-1zM21 303h1v1h-1zM23 303h1v1h-1zM1018 303h1v1h-1zM1020 303h1v1h-1zM21 316h1v1h-1zM23 316h1v1h-1zM1018 316h1v1h-1zM1020 316h1v1h-1zM21 329h1v1h-1zM23 329h1v1h-1zM1018 329h1v1h-1zM1020 329h1v1h-1zM21 355h1v1h-1zM23 355h1v1h-1zM1018 355h1v1h-1zM1020 355h1v1h-1zM21 368h1v1h-1zM23 368h1v1h-1zM1018 368h1v1h-1zM1020 368h1v1h-1zM21 381h1v1h-1zM23 381h1v1h-1zM1018 381h1v1h-1zM1020 381h1v1h-1zM21 394h1v1h-1zM23 394h1v1h-1zM1018 394h1v1h-1zM1020 394h1v1h-1zM21 420h1v1h-1zM23 420h1v1h-1zM1018 420h1v1h-1zM1020 420h1v1h-1zM21 433h1v1h-1zM23 433h1v1h-1zM1018 433h1v1h-1zM1020 433h1v1h-1zM21 446h1v1h-1zM23 446h1v1h-1zM1018 446h1v1h-1zM1020 446h1v1h-1zM21 459h1v1h-1zM23 459h1v1h-1zM1018 459h1v1h-1zM1020 459h1v1h-1zM21 485h1v1h-1zM23 485h1v1h-1zM1018 485h1v1h-1zM1020 485h1v1h-1zM21 498h1v1h-1zM23 498h1v1h-1zM1018 498h1v1h-1zM1020 498h1v1h-1zM21 511h1v1h-1zM23 511h1v1h-1zM1018 511h1v1h-1zM1020 511h1v1h-1zM21 524h1v1h-1zM23 524h1v1h-1zM1018 524h1v1h-1zM1020 524h1v1h-1zM21 550h1v1h-1zM23 550h1v1h-1zM1018 550h1v1h-1zM1020 550h1v1h-1zM21 563h1v1h-1zM23 563h1v1h-1zM1018 563h1v1h-1zM1020 563h1v1h-1zM21 576h1v1h-1zM23 576h1v1h-1zM1018 576h1v1h-1zM1020 576h1v1h-1zM21 589h1v1h-1zM23 589h1v1h-1zM1018 589h1v1h-1zM1020 589h1v1h-1zM21 615h1v1h-1zM23 615h1v1h-1zM1018 615h1v1h-1zM1020 615h1v1h-1zM21 628h1v1h-1zM23 628h1v1h-1zM1018 628h1v1h-1zM1020 628h1v1h-1zM21 641h1v1h-1zM23 641h1v1h-1zM1018 641h1v1h-1zM1020 641h1v1h-1zM21 654h1v1h-1zM23 654h1v1h-1zM1018 654h1v1h-1zM1020 654h1v1h-1zM21 342h1v1h-1zM23 342h1v1h-1zM25 342h1v1h-1zM27 342h1v1h-1zM29 342h1v1h-1zM31 342h1v1h-1zM33 342h1v1h-1zM35 342h1v1h-1zM37 342h1v1h-1zM39 342h1v1h-1zM41 342h1v1h-1zM43 342h1v1h-1zM45 342h1v1h-1zM47 342h1v1h-1zM49 342h1v1h-1zM51 342h1v1h-1zM53 342h1v1h-1zM55 342h1v1h-1zM57 342h1v1h-1zM59 342h1v1h-1zM61 342h1v1h-1zM63 342h1v1h-1zM65 342h1v1h-1zM67 342h1v1h-1zM69 342h1v1h-1zM71 342h1v1h-1zM73 342h1v1h-1zM75 342h1v1h-1zM77 342h1v1h-1zM79 342h1v1h-1zM81 342h1v1h-1zM83 342h1v1h-1zM85 342h1v1h-1zM87 342h1v1h-1zM89 342h1v1h-1zM91 342h1v1h-1zM93 342h1v1h-1zM95 342h1v1h-1zM97 342h1v1h-1zM99 342h1v1h-1zM101 342h1v1h-1zM103 342h1v1h-1zM105 342h1v1h-1zM107 342h1v1h-1zM109 342h1v1h-1zM111 342h1v1h-1zM113 342h1v1h-1zM115 342h1v1h-1zM117 342h1v1h-1zM119 342h1v1h-1zM121 342h1v1h-1zM123 342h1v1h-1zM125 342h1v1h-1zM127 342h1v1h-1zM129 342h1v1h-1zM131 342h1v1h-1zM133 342h1v1h-1zM135 342h1v1h-1zM137 342h1v1h-1zM139 342h1v1h-1zM141 342h1v1h-1zM143 342h1v1h-1zM145 342h1v1h-1zM147 342h1v1h-1zM149 342h1v1h-1zM151 342h1v1h-1zM153 342h1v1h-1zM155 342h1v1h-1zM157 342h1v1h-1zM159 342h1v1h-1zM161 342h1v1h-1zM163 342h1v1h-1zM165 342h1v1h-1zM167 342h1v1h-1zM169 342h1v1h-1zM171 342h1v1h-1zM173 342h1v1h-1zM175 342h1v1h-1zM177 342h1v1h-1zM179 342h1v1h-1zM181 342h1v1h-1zM183 342h1v1h-1zM185 342h1v1h-1zM187 342h1v1h-1zM189 342h1v1h-1zM191 342h1v1h-1zM193 342h1v1h-1zM195 342h1v1h-1zM197 342h1v1h-1zM199 342h1v1h-1zM201 342h1v1h-1zM203 342h1v1h-1zM205 342h1v1h-1zM207 342h1v1h-1zM209 342h1v1h-1zM211 342h1v1h-1zM213 342h1v1h-1zM215 342h1v1h-1zM217 342h1v1h-1zM219 342h1v1h-1zM221 342h1v1h-1zM223 342h1v1h-1zM225 342h1v1h-1zM227 342h1v1h-1zM229 342h1v1h-1zM231 342h1v1h-1zM233 342h1v1h-1zM235 342h1v1h-1zM237 342h1v1h-1zM239 342h1v1h-1zM241 342h1v1h-1zM243 342h1v1h-1zM245 342h1v1h-1zM247 342h1v1h-1zM249 342h1v1h-1zM251 342h1v1h-1zM253 342h1v1h-1zM255 342h1v1h-1zM257 342h1v1h-1zM259 342h1v1h-1zM261 342h1v1h-1zM263 342h1v1h-1zM265 342h1v1h-1zM267 342h1v1h-1zM269 342h1v1h-1zM271 342h1v1h-1zM273 342h1v1h-1zM275 342h1v1h-1zM277 342h1v1h-1zM279 342h1v1h-1zM281 342h1v1h-1zM283 342h1v1h-1zM285 342h1v1h-1zM287 342h1v1h-1zM289 342h1v1h-1zM291 342h1v1h-1zM293 342h1v1h-1zM295 342h1v1h-1zM297 342h1v1h-1zM299 342h1v1h-1zM301 342h1v1h-1zM303 342h1v1h-1zM305 342h1v1h-1zM307 342h1v1h-1zM309 342h1v1h-1zM311 342h1v1h-1zM313 342h1v1h-1zM315 342h1v1h-1zM317 342h1v1h-1zM319 342h1v1h-1zM321 342h1v1h-1zM323 342h1v1h-1zM325 342h1v1h-1zM327 342h1v1h-1zM329 342h1v1h-1zM331 342h1v1h-1zM333 342h1v1h-1zM335 342h1v1h-1zM337 342h1v1h-1zM339 342h1v1h-1zM341 342h1v1h-1zM343 342h1v1h-1zM345 342h1v1h-1zM347 342h1v1h-1zM349 342h1v1h-1zM351 342h1v1h-1zM353 342h1v1h-1zM355 342h1v1h-1zM357 342h1v1h-1zM359 342h1v1h-1zM361 342h1v1h-1zM363 342h1v1h-1zM365 342h1v1h-1zM367 342h1v1h-1zM369 342h1v1h-1zM371 342h1v1h-1zM373 342h1v1h-1zM375 342h1v1h-1zM377 342h1v1h-1zM379 342h1v1h-1zM381 342h1v1h-1zM383 342h1v1h-1zM385 342h1v1h-1zM387 342h1v1h-1zM389 342h1v1h-1zM391 342h1v1h-1zM393 342h1v1h-1zM395 342h1v1h-1zM397 342h1v1h-1zM399 342h1v1h-1zM401 342h1v1h-1zM403 342h1v1h-1zM405 342h1v1h-1zM407 342h1v1h-1zM409 342h1v1h-1zM411 342h1v1h-1zM413 342h1v1h-1zM415 342h1v1h-1zM417 342h1v1h-1zM419 342h1v1h-1zM421 342h1v1h-1zM423 342h1v1h-1zM425 342h1v1h-1zM427 342h1v1h-1zM429 342h1v1h-1zM431 342h1v1h-1zM433 342h1v1h-1zM435 342h1v1h-1zM437 342h1v1h-1zM439 342h1v1h-1zM441 342h1v1h-1zM443 342h1v1h-1zM445 342h1v1h-1zM447 342h1v1h-1zM449 342h1v1h-1zM451 342h1v1h-1zM453 342h1v1h-1zM455 342h1v1h-1zM457 342h1v1h-1zM459 342h1v1h-1zM461 342h1v1h-1zM463 342h1v1h-1zM465 342h1v1h-1zM467 342h1v1h-1zM469 342h1v1h-1zM471 342h1v1h-1zM473 342h1v1h-1zM475 342h1v1h-1zM477 342h1v1h-1zM479 342h1v1h-1zM481 342h1v1h-1zM483 342h1v1h-1zM485 342h1v1h-1zM487 342h1v1h-1zM489 342h1v1h-1zM491 342h1v1h-1zM493 342h1v1h-1zM495 342h1v1h-1zM497 342h1v1h-1zM499 342h1v1h-1zM501 342h1v1h-1zM503 342h1v1h-1zM505 342h1v1h-1zM507 342h1v1h-1zM509 342h1v1h-1zM511 342h1v1h-1zM513 342h1v1h-1zM515 342h1v1h-1zM517 342h1v1h-1zM519 342h1v1h-1zM521 342h1v1h-1zM523 342h1v1h-1zM525 342h1v1h-1zM527 342h1v1h-1zM529 342h1v1h-1zM531 342h1v1h-1zM533 342h1v1h-1zM535 342h1v1h-1zM537 342h1v1h-1zM539 342h1v1h-1zM541 342h1v1h-1zM543 342h1v1h-1zM545 342h1v1h-1zM547 342h1v1h-1zM549 342h1v1h-1zM551 342h1v1h-1zM553 342h1v1h-1zM555 342h1v1h-1zM557 342h1v1h-1zM559 342h1v1h-1zM561 342h1v1h-1zM563 342h1v1h-1zM565 342h1v1h-1zM567 342h1v1h-1zM569 342h1v1h-1zM571 342h1v1h-1zM573 342h1v1h-1zM575 342h1v1h-1zM577 342h1v1h-1zM579 342h1v1h-1zM581 342h1v1h-1zM583 342h1v1h-1zM585 342h1v1h-1zM587 342h1v1h-1zM589 342h1v1h-1zM591 342h1v1h-1zM593 342h1v1h-1zM595 342h1v1h-1zM597 342h1v1h-1zM599 342h1v1h-1zM601 342h1v1h-1zM603 342h1v1h-1zM605 342h1v1h-1zM607 342h1v1h-1zM609 342h1v1h-1zM611 342h1v1h-1zM613 342h1v1h-1zM615 342h1v1h-1zM617 342h1v1h-1zM619 342h1v1h-1zM621 342h1v1h-1zM623 342h1v1h-1zM625 342h1v1h-1zM627 342h1v1h-1zM629 342h1v1h-1zM631 342h1v1h-1zM633 342h1v1h-1zM635 342h1v1h-1zM637 342h1v1h-1zM639 342h1v1h-1zM641 342h1v1h-1zM643 342h1v1h-1zM645 342h1v1h-1zM647 342h1v1h-1zM649 342h1v1h-1zM651 342h1v1h-1zM653 342h1v1h-1zM655 342h1v1h-1zM657 342h1v1h-1zM659 342h1v1h-1zM661 342h1v1h-1zM663 342h1v1h-1zM665 342h1v1h-1zM667 342h1v1h-1zM669 342h1v1h-1zM671 342h1v1h-1zM673 342h1v1h-1zM675 342h1v1h-1zM677 342h1v1h-1zM679 342h1v1h-1zM681 342h1v1h-1zM683 342h1v1h-1zM685 342h1v1h-1zM687 342h1v1h-1zM689 342h1v1h-1zM691 342h1v1h-1zM693 342h1v1h-1zM695 342h1v1h-1zM697 342h1v1h-1zM699 342h1v1h-1zM701 342h1v1h-1zM703 342h1v1h-1zM705 342h1v1h-1zM707 342h1v1h-1zM709 342h1v1h-1zM711 342h1v1h-1zM713 342h1v1h-1zM715 342h1v1h-1zM717 342h1v1h-1zM719 342h1v1h-1zM721 342h1v1h-1zM723 342h1v1h-1zM725 342h1v1h-1zM727 342h1v1h-1zM729 342h1v1h-1zM731 342h1v1h-1zM733 342h1v1h-1zM735 342h1v1h-1zM737 342h1v1h-1zM739 342h1v1h-1zM741 342h1v1h-1zM743 342h1v1h-1zM745 342h1v1h-1zM747 342h1v1h-1zM749 342h1v1h-1zM751 342h1v1h-1zM753 342h1v1h-1zM755 342h1v1h-1zM757 342h1v1h-1zM759 342h1v1h-1zM761 342h1v1h-1zM763 342h1v1h-1zM765 342h1v1h-1zM767 342h1v1h-1zM769 342h1v1h-1zM771 342h1v1h-1zM773 342h1v1h-1zM775 342h1v1h-1zM777 342h1v1h-1zM779 342h1v1h-1zM781 342h1v1h-1zM783 342h1v1h-1zM785 342h1v1h-1zM787 342h1v1h-1zM789 342h1v1h-1zM791 342h1v1h-1zM793 342h1v1h-1zM795 342h1v1h-1zM797 342h1v1h-1zM799 342h1v1h-1zM801 342h1v1h-1zM803 342h1v1h-1zM805 342h1v1h-1zM807 342h1v1h-1zM809 342h1v1h-1zM811 342h1v1h-1zM813 342h1v1h-1zM815 342h1v1h-1zM817 342h1v1h-1zM819 342h1v1h-1zM821 342h1v1h-1zM823 342h1v1h-1zM825 342h1v1h-1zM827 342h1v1h-1zM829 342h1v1h-1zM831 342h1v1h-1zM833 342h1v1h-1zM835 342h1v1h-1zM837 342h1v1h-1zM839 342h1v1h-1zM841 342h1v1h-1zM843 342h1v1h-1zM845 342h1v1h-1zM847 342h1v1h-1zM849 342h1v1h-1zM851 342h1v1h-1zM853 342h1v1h-1zM855 342h1v1h-1zM857 342h1v1h-1zM859 342h1v1h-1zM861 342h1v1h-1zM863 342h1v1h-1zM865 342h1v1h-1zM867 342h1v1h-1zM869 342h1v1h-1zM871 342h1v1h-1zM873 342h1v1h-1zM875 342h1v1h-1zM877 342h1v1h-1zM879 342h1v1h-1zM881 342h1v1h-1zM883 342h1v1h-1zM885 342h1v1h-1zM887 342h1v1h-1zM889 342h1v1h-1zM891 342h1v1h-1zM893 342h1v1h-1zM895 342h1v1h-1zM897 342h1v1h-1zM899 342h1v1h-1zM901 342h1v1h-1zM903 342h1v1h-1zM905 342h1v1h-1zM907 342h1v1h-1zM909 342h1v1h-1zM911 342h1v1h-1zM913 342h1v1h-1zM915 342h1v1h-1zM917 342h1v1h-1zM919 342h1v1h-1zM921 342h1v1h-1zM923 342h1v1h-1zM925 342h1v1h-1zM927 342h1v1h-1zM929 342h1v1h-1zM931 342h1v1h-1zM933 342h1v1h-1zM935 342h1v1h-1zM937 342h1v1h-1zM939 342h1v1h-1zM941 342h1v1h-1zM943 342h1v1h-1zM945 342h1v1h-1zM947 342h1v1h-1zM949 342h1v1h-1zM951 342h1v1h-1zM953 342h1v1h-1zM955 342h1v1h-1zM957 342h1v1h-1zM959 342h1v1h-1zM961 342h1v1h-1zM963 342h1v1h-1zM965 342h1v1h-1zM967 342h1v1h-1zM969 342h1v1h-1zM971 342h1v1h-1zM973 342h1v1h-1zM975 342h1v1h-1zM977 342h1v1h-1zM979 342h1v1h-1zM981 342h1v1h-1zM983 342h1v1h-1zM985 342h1v1h-1zM987 342h1v1h-1zM989 342h1v1h-1zM991 342h1v1h-1zM993 342h1v1h-1zM995 342h1v1h-1zM997 342h1v1h-1zM999 342h1v1h-1zM1001 342h1v1h-1zM1003 342h1v1h-1zM1005 342h1v1h-1zM1007 342h1v1h-1zM1009 342h1v1h-1zM1011 342h1v1h-1zM1013 342h1v1h-1zM1015 342h1v1h-1zM1017 342h1v1h-1zM1019 342h1v1h-1zM41 339h1v1h-1zM41 341h1v3h-1zM41 345h1v1h-1zM61 339h1v1h-1zM61 341h1v3h-1zM61 345h1v1h-1zM81 339h1v1h-1zM81 341h1v3h-1zM81 345h1v1h-1zM101 339h1v1h-1zM101 341h1v3h-1zM101 345h1v1h-1zM121 336h1v1h-1zM121 338h1v1h-1zM121 340h1v1h-1zM121 342h1v1h-1zM121 344h1v1h-1zM121 346h1v1h-1zM121 348h1v1h-1zM141 339h1v1h-1zM141 341h1v3h-1zM141 345h1v1h-1zM161 339h1v1h-1zM161 341h1v3h-1zM161 345h1v1h-1zM181 339h1v1h-1zM181 341h1v3h-1zM181 345h1v1h-1zM201 339h1v1h-1zM201 341h1v3h-1zM201 345h1v1h-1zM221 336h1v1h-1zM221 338h1v1h-1zM221 340h1v1h-1zM221 342h1v1h-1zM221 344h1v1h-1zM221 346h1v1h-1zM221 348h1v1h-1zM241 339h1v1h-1zM241 341h1v3h-1zM241 345h1v1h-1zM261 339h1v1h-1zM261 341h1v3h-1zM261 345h1v1h-1zM281 339h1v1h-1zM281 341h1v3h-1zM281 345h1v1h-1zM301 339h1v1h-1zM301 341h1v3h-1zM301 345h1v1h-1zM321 336h1v1h-1zM321 338h1v1h-1zM321 340h1v1h-1zM321 342h1v1h-1zM321 344h1v1h-1zM321 346h1v1h-1zM321 348h1v1h-1zM341 339h1v1h-1zM341 341h1v3h-1zM341 345h1v1h-1zM361 339h1v1h-1zM361 341h1v3h-1zM361 345h1v1h-1zM381 339h1v1h-1zM381 341h1v3h-1zM381 345h1v1h-1zM401 339h1v1h-1zM401 341h1v3h-1zM401 345h1v1h-1zM421 336h1v1h-1zM421 338h1v1h-1zM421 340h1v1h-1zM421 342h1v1h-1zM421 344h1v1h-1zM421 346h1v1h-1zM421 348h1v1h-1zM441 339h1v1h-1zM441 341h1v3h-1zM441 345h1v1h-1zM461 339h1v1h-1zM461 341h1v3h-1zM461 345h1v1h-1zM481 339h1v1h-1zM481 341h1v3h-1zM481 345h1v1h-1zM501 339h1v1h-1zM501 341h1v3h-1zM501 345h1v1h-1zM541 339h1v1h-1zM541 341h1v3h-1zM541 345h1v1h-1zM561 339h1v1h-1zM561 341h1v3h-1zM561 345h1v1h-1zM581 339h1v1h-1zM581 341h1v3h-1zM581 345h1v1h-1zM601 339h1v1h-1zM601 341h1v3h-1zM601 345h1v1h-1zM621 336h1v1h-1zM621 338h1v1h-1zM621 340h1v1h-1zM621 342h1v1h-1zM621 344h1v1h-1zM621 346h1v1h-1zM621 348h1v1h-1zM641 339h1v1h-1zM641 341h1v3h-1zM641 345h1v1h-1zM661 339h1v1h-1zM661 341h1v3h-1zM661 345h1v1h-1zM681 339h1v1h-1zM681 341h1v3h-1zM681 345h1v1h-1zM701 339h1v1h-1zM701 341h1v3h-1zM701 345h1v1h-1zM721 336h1v1h-1zM721 338h1v1h-1zM721 340h1v1h-1zM721 342h1v1h-1zM721 344h1v1h-1zM721 346h1v1h-1zM721 348h1v1h-1zM741 339h1v1h-1zM741 341h1v3h-1zM741 345h1v1h-1zM761 339h1v1h-1zM761 341h1v3h-1zM761 345h1v1h-1zM781 339h1v1h-1zM781 341h1v3h-1zM781 345h1v1h-1zM801 339h1v1h-1zM801 341h1v3h-1zM801 345h1v1h-1zM821 336h1v1h-1zM821 338h1v1h-1zM821 340h1v1h-1zM821 342h1v1h-1zM821 344h1v1h-1zM821 346h1v1h-1zM821 348h1v1h-1zM841 339h1v1h-1zM841 341h1v3h-1zM841 345h1v1h-1zM861 339h1v1h-1zM861 341h1v3h-1zM861 345h1v1h-1zM881 339h1v1h-1zM881 341h1v3h-1zM881 345h1v1h-1zM901 339h1v1h-1zM901 341h1v3h-1zM901 345h1v1h-1zM921 336h1v1h-1zM921 338h1v1h-1zM921 340h1v1h-1zM921 342h1v1h-1zM921 344h1v1h-1zM921 346h1v1h-1zM921 348h1v1h-1zM941 339h1v1h-1zM941 341h1v3h-1zM941 345h1v1h-1zM961 339h1v1h-1zM961 341h1v3h-1zM961 345h1v1h-1zM981 339h1v1h-1zM981 341h1v3h-1zM981 345h1v1h-1zM1001 339h1v1h-1zM1001 341h1v3h-1zM1001 345h1v1h-1zM521 40h1v1h-1zM521 42h1v1h-1zM521 44h1v1h-1zM521 46h1v1h-1zM521 48h1v1h-1zM521 50h1v1h-1zM521 52h1v1h-1zM521 54h1v1h-1zM521 56h1v1h-1zM521 58h1v1h-1zM521 60h1v1h-1zM521 62h1v1h-1zM521 64h1v1h-1zM521 66h1v1h-1zM521 68h1v1h-1zM521 70h1v1h-1zM521 72h1v1h-1zM521 74h1v1h-1zM521 76h1v1h-1zM521 78h1v1h-1zM521 80h1v1h-1zM521 82h1v1h-1zM521 84h1v1h-1zM521 86h1v1h-1zM521 88h1v1h-1zM521 90h1v1h-1zM521 92h1v1h-1zM521 94h1v1h-1zM521 96h1v1h-1zM521 98h1v1h-1zM521 100h1v1h-1zM521 102h1v1h-1zM521 104h1v1h-1zM521 106h1v1h-1zM521 108h1v1h-1zM521 110h1v1h-1zM521 112h1v1h-1zM521 114h1v1h-1zM521 116h1v1h-1zM521 118h1v1h-1zM521 120h1v1h-1zM521 122h1v1h-1zM521 124h1v1h-1zM521 126h1v1h-1zM521 128h1v1h-1zM521 130h1v1h-1zM521 132h1v1h-1zM521 134h1v1h-1zM521 136h1v1h-1zM521 138h1v1h-1zM521 140h1v1h-1zM521 142h1v1h-1zM521 144h1v1h-1zM521 146h1v1h-1zM521 148h1v1h-1zM521 150h1v1h-1zM521 152h1v1h-1zM521 154h1v1h-1zM521 156h1v1h-1zM521 158h1v1h-1zM521 160h1v1h-1zM521 162h1v1h-1zM521 164h1v1h-1zM521 166h1v1h-1zM521 168h1v1h-1zM521 170h1v1h-1zM521 172h1v1h-1zM521 174h1v1h-1zM521 176h1v1h-1zM521 178h1v1h-1zM521 180h1v1h-1zM521 182h1v1h-1zM521 184h1v1h-1zM521 186h1v1h-1zM521 188h1v1h-1zM521 190h1v1h-1zM521 192h1v1h-1zM521 194h1v1h-1zM521 196h1v1h-1zM521 198h1v1h-1zM521 200h1v1h-1zM521 202h1v1h-1zM521 204h1v1h-1zM521 206h1v1h-1zM521 208h1v1h-1zM521 210h1v1h-1zM521 212h1v1h-1zM521 214h1v1h-1zM521 216h1v1h-1zM521 218h1v1h-1zM521 220h1v1h-1zM521 222h1v1h-1zM521 224h1v1h-1zM521 226h1v1h-1zM521 228h1v1h-1zM521 230h1v1h-1zM521 232h1v1h-1zM521 234h1v1h-1zM521 236h1v1h-1zM521 238h1v1h-1zM521 240h1v1h-1zM521 242h1v1h-1zM521 244h1v1h-1zM521 246h1v1h-1zM521 248h1v1h-1zM521 250h1v1h-1zM521 252h1v1h-1zM521 254h1v1h-1zM521 256h1v1h-1zM521 258h1v1h-1zM521 260h1v1h-1zM521 262h1v1h-1zM521 264h1v1h-1zM521 266h1v1h-1zM521 268h1v1h-1zM521 270h1v1h-1zM521 272h1v1h-1zM521 274h1v1h-1zM521 276h1v1h-1zM521 278h1v1h-1zM521 280h1v1h-1zM521 282h1v1h-1zM521 284h1v1h-1zM521 286h1v1h-1zM521 288h1v1h-1zM521 290h1v1h-1zM521 292h1v1h-1zM521 294h1v1h-1zM521 296h1v1h-1zM521 298h1v1h-1zM521 300h1v1h-1zM521 302h1v1h-1zM521 304h1v1h-1zM521 306h1v1h-1zM521 308h1v1h-1zM521 310h1v1h-1zM521 312h1v1h-1zM521 314h1v1h-1zM521 316h1v1h-1zM521 318h1v1h-1zM521 320h1v1h-1zM521 322h1v1h-1zM521 324h1v1h-1zM521 326h1v1h-1zM521 328h1v1h-1zM521 330h1v1h-1zM521 332h1v1h-1zM521 334h1v1h-1zM521 336h1v1h-1zM521 338h1v1h-1zM521 340h1v1h-1zM521 342h1v1h-1zM521 344h1v1h-1zM521 346h1v1h-1zM521 348h1v1h-1zM521 350h1v1h-1zM521 352h1v1h-1zM521 354h1v1h-1zM521 356h1v1h-1zM521 358h1v1h-1zM521 360h1v1h-1zM521 362h1v1h-1zM521 364h1v1h-1zM521 366h1v1h-1zM521 368h1v1h-1zM521 370h1v1h-1zM521 372h1v1h-1zM521 374h1v1h-1zM521 376h1v1h-1zM521 378h1v1h-1zM521 380h1v1h-1zM521 382h1v1h-1zM521 384h1v1h-1zM521 386h1v1h-1zM521 388h1v1h-1zM521 390h1v1h-1zM521 392h1v1h-1zM521 394h1v1h-1zM521 396h1v1h-1zM521 398h1v1h-1zM521 400h1v1h-1zM521 402h1v1h-1zM521 404h1v1h-1zM521 406h1v1h-1zM521 408h1v1h-1zM521 410h1v1h-1zM521 412h1v1h-1zM521 414h1v1h-1zM521 416h1v1h-1zM521 418h1v1h-1zM521 420h1v1h-1zM521 422h1v1h-1zM521 424h1v1h-1zM521 426h1v1h-1zM521 428h1v1h-1zM521 430h1v1h-1zM521 432h1v1h-1zM521 434h1v1h-1zM521 436h1v1h-1zM521 438h1v1h-1zM521 440h1v1h-1zM521 442h1v1h-1zM521 444h1v1h-1zM521 446h1v1h-1zM521 448h1v1h-1zM521 450h1v1h-1zM521 452h1v1h-1zM521 454h1v1h-1zM521 456h1v1h-1zM521 458h1v1h-1zM521 460h1v1h-1zM521 462h1v1h-1zM521 464h1v1h-1zM521 466h1v1h-1zM521 468h1v1h-1zM521 470h1v1h-1zM521 472h1v1h-1zM521 474h1v1h-1zM521 476h1v1h-1zM521 478h1v1h-1zM521 480h1v1h-1zM521 482h1v1h-1zM521 484h1v1h-1zM521 486h1v1h-1zM521 488h1v1h-1zM521 490h1v1h-1zM521 492h1v1h-1zM521 494h1v1h-1zM521 496h1v1h-1zM521 498h1v1h-1zM521 500h1v1h-1zM521 502h1v1h-1zM521 504h1v1h-1zM521 506h1v1h-1zM521 508h1v1h-1zM521 510h1v1h-1zM521 512h1v1h-1zM521 514h1v1h-1zM521 516h1v1h-1zM521 518h1v1h-1zM521 520h1v1h-1zM521 522h1v1h-1zM521 524h1v1h-1zM521 526h1v1h-1zM521 528h1v1h-1zM521 530h1v1h-1zM521 532h1v1h-1zM521 534h1v1h-1zM521 536h1v1h-1zM521 538h1v1h-1zM521 540h1v1h-1zM521 542h1v1h-1zM521 544h1v1h-1zM521 546h1v1h-1zM521 548h1v1h-1zM521 550h1v1h-1zM521 552h1v1h-1zM521 554h1v1h-1zM521 556h1v1h-1zM521 558h1v1h-1zM521 560h1v1h-1zM521 562h1v1h-1zM521 564h1v1h-1zM521 566h1v1h-1zM521 568h1v1h-1zM521 570h1v1h-1zM521 572h1v1h-1zM521 574h1v1h-1zM521 576h1v1h-1zM521 578h1v1h-1zM521 580h1v1h-1zM521 582h1v1h-1zM521 584h1v1h-1zM521 586h1v1h-1zM521 588h1v1h-1zM521 590h1v1h-1zM521 592h1v1h-1zM521 594h1v1h-1zM521 596h1v1h-1zM521 598h1v1h-1zM521 600h1v1h-1zM521 602h1v1h-1zM521 604h1v1h-1zM521 606h1v1h-1zM521 608h1v1h-1zM521 610h1v1h-1zM521 612h1v1h-1zM521 614h1v1h-1zM521 616h1v1h-1zM521 618h1v1h-1zM521 620h1v1h-1zM521 622h1v1h-1zM521 624h1v1h-1zM521 626h1v1h-1zM521 628h1v1h-1zM521 630h1v1h-1zM521 632h1v1h-1zM521 634h1v1h-1zM521 636h1v1h-1zM521 638h1v1h-1zM521 640h1v1h-1zM521 642h1v1h-1zM521 644h1v1h-1zM521 646h1v1h-1zM521 648h1v1h-1zM521 650h1v1h-1zM521 652h1v1h-1zM521 654h1v1h-1zM521 656h1v1h-1zM521 658h1v1h-1zM521 660h1v1h-1zM521 662h1v1h-1zM521 664h1v1h-1zM521 666h1v1h-1zM518 30h1v1h-1zM520 30h3v1h-3zM524 30h1v1h-1zM518 43h1v1h-1zM520 43h3v1h-3zM524 43h1v1h-1zM518 56h1v1h-1zM520 56h3v1h-3zM524 56h1v1h-1zM518 69h1v1h-1zM520 69h3v1h-3zM524 69h1v1h-1zM515 82h1v1h-1zM517 82h1v1h-1zM519 82h1v1h-1zM521 82h1v1h-1zM523 82h1v1h-1zM525 82h1v1h-1zM527 82h1v1h-1zM521 81h1v3h-1zM518 95h1v1h-1zM520 95h3v1h-3zM524 95h1v1h-1zM518 108h1v1h-1zM520 108h3v1h-3zM524 108h1v1h-1zM518 121h1v1h-1zM520 121h3v1h-3zM524 121h1v1h-1zM518 134h1v1h-1zM520 134h3v1h-3zM524 134h1v1h-1zM515 147h1v1h-1zM517 147h1v1h-1zM519 147h1v1h-1zM521 147h1v1h-1zM523 147h1v1h-1zM525 147h1v1h-1zM527 147h1v1h-1zM521 146h1v3h-1zM518 160h1v1h-1zM520 160h3v1h-3zM524 160h1v1h-1zM518 173h1v1h-1zM520 173h3v1h-3zM524 173h1v1h-1zM518 186h1v1h-1zM520 186h3v1h-3zM524 186h1v1h-1zM518 199h1v1h-1zM520 199h3v1h-3zM524 199h1v1h-1zM515 212h1v1h-1zM517 212h1v1h-1zM519 212h1v1h-1zM521 212h1v1h-1zM523 212h1v1h-1zM525 212h1v1h-1zM527 212h1v1h-1zM521 211h1v3h-1zM518 225h1v1h-1zM520 225h3v1h-3zM524 225h1v1h-1zM518 238h1v1h-1zM520 238h3v1h-3zM524 238h1v1h-1zM518 251h1v1h-1zM520 251h3v1h-3zM524 251h1v1h-1zM518 264h1v1h-1zM520 264h3v1h-3zM524 264h1v1h-1zM515 277h1v1h-1zM517 277h1v1h-1zM519 277h1v1h-1zM521 277h1v1h-1zM523 277h1v1h-1zM525 277h1v1h-1zM527 277h1v1h-1zM521 276h1v3h-1zM518 290h1v1h-1zM520 290h3v1h-3zM524 290h1v1h-1zM518 303h1v1h-1zM520 303h3v1h-3zM524 303h1v1h-1zM518 316h1v1h-1zM520 316h3v1h-3zM524 316h1v1h-1zM518 329h1v1h-1zM520 329h3v1h-3zM524 329h1v1h-1zM518 355h1v1h-1zM520 355h3v1h-3zM524 355h1v1h-1zM518 368h1v1h-1zM520 368h3v1h-3zM524 368h1v1h-1zM518 381h1v1h-1zM520 381h3v1h-3zM524 381h1v1h-1zM518 394h1v1h-1zM520 394h3v1h-3zM524 394h1v1h-1zM515 407h1v1h-1zM517 407h1v1h-1zM519 407h1v1h-1zM521 407h1v1h-1zM523 407h1v1h-1zM525 407h1v1h-1zM527 407h1v1h-1zM521 406h1v3h-1zM518 420h1v1h-1zM520 420h3v1h-3zM524 420h1v1h-1zM518 433h1v1h-1zM520 433h3v1h-3zM524 433h1v1h-1zM518 446h1v1h-1zM520 446h3v1h-3zM524 446h1v1h-1zM518 459h1v1h-1zM520 459h3v1h-3zM524 459h1v1h-1zM515 472h1v1h-1zM517 472h1v1h-1zM519 472h1v1h-1zM521 472h1v1h-1zM523 472h1v1h-1zM525 472h1v1h-1zM527 472h1v1h-1zM521 471h1v3h-1zM518 485h1v1h-1zM520 485h3v1h-3zM524 485h1v1h-1zM518 498h1v1h-1zM520 498h3v1h-3zM524 498h1v1h-1zM518 511h1v1h-1zM520 511h3v1h-3zM524 511h1v1h-1zM518 524h1v1h-1zM520 524h3v1h-3zM524 524h1v1h-1zM515 537h1v1h-1zM517 537h1v1h-1zM519 537h1v1h-1zM521 537h1v1h-1zM523 537h1v1h-1zM525 537h1v1h-1zM527 537h1v1h-1zM521 536h1v3h-1zM518 550h1v1h-1zM520 550h3v1h-3zM524 550h1v1h-1zM518 563h1v1h-1zM520 563h3v1h-3zM524 563h1v1h-1zM518 576h1v1h-1zM520 576h3v1h-3zM524 576h1v1h-1zM518 589h1v1h-1zM520 589h3v1h-3zM524 589h1v1h-1zM515 602h1v1h-1zM517 602h1v1h-1zM519 602h1v1h-1zM521 602h1v1h-1zM523 602h1v1h-1zM525 602h1v1h-1zM527 602h1v1h-1zM521 601h1v3h-1zM518 615h1v1h-1zM520 615h3v1h-3zM524 615h1v1h-1zM518 628h1v1h-1zM520 628h3v1h-3zM524 628h1v1h-1zM518 641h1v1h-1zM520 641h3v1h-3zM524 641h1v1h-1zM518 654h1v1h-1zM520 654h3v1h-3zM524 654h1v1h-1z"/>
<rect x="20" y="16" width="1002" height="1" fill="#5b9bd5"/>
<rect x="20" y="668" width="1002" height="1" fill="#5b9bd5"/>
<rect x="20" y="16" width="1" height="653" fill="#5b9bd5"/>
<rect x="1021" y="16" width="1" height="653" fill="#5b9bd5"/>
<rect x="121" y="0" width="800" height="1" fill="#5b9bd5"/>
<rect x="121" y="15" width="800" height="1" fill="#5b9bd5"/>
<rect x="121" y="0" width="1" height="16" fill="#5b9bd5"/>
<rect x="920" y="0" width="1" height="16" fill="#5b9bd5"/>
<rect x="282" y="7" width="479" height="1" fill="#ffff00"/>
<rect x="515" y="1" width="13" height="14" fill="#ffffff"/>
<rect x="517" y="2" width="9" height="12" fill="#000"/>
<path fill="#ffff00" d="M144 675h1v1h-1zM145 675h1v1h-1zM146 675h1v1h-1zM144 676h1v1h-1zM147 676h1v1h-1zM144 677h1v1h-1zM147 677h1v1h-1zM144 678h1v1h-1zM145 678h1v1h-1zM146 678h1v1h-1zM144 679h1v1h-1zM147 679h1v1h-1zM144 680h1v1h-1zM147 680h1v1h-1zM144 681h1v1h-1zM145 681h1v1h-1zM146 681h1v1h-1zM148 679h1v1h-1zM152 679h1v1h-1zM148 680h1v1h-1zM152 680h1v1h-1zM148 681h1v1h-1zM150 681h1v1h-1zM152 681h1v1h-1zM148 682h1v1h-1zM150 682h1v1h-1zM152 682h1v1h-1zM148 683h1v1h-1zM150 683h1v1h-1zM152 683h1v1h-1zM149 684h1v1h-1zM151 684h1v1h-1zM149 685h1v1h-1zM151 685h1v1h-1z"/>
<path fill="#c400c4" d="M422 675h1v1h-1zM423 675h1v1h-1zM424 675h1v1h-1zM422 676h1v1h-1zM425 676h1v1h-1zM422 677h1v1h-1zM425 677h1v1h-1zM422 678h1v1h-1zM423 678h1v1h-1zM424 678h1v1h-1zM422 679h1v1h-1zM425 679h1v1h-1zM422 680h1v1h-1zM425 680h1v1h-1zM422 681h1v1h-1zM423 681h1v1h-1zM424 681h1v1h-1zM426 679h1v1h-1zM430 679h1v1h-1zM426 680h1v1h-1zM430 680h1v1h-1zM426 681h1v1h-1zM428 681h1v1h-1zM430 681h1v1h-1zM426 682h1v1h-1zM428 682h1v1h-1zM430 682h1v1h-1zM426 683h1v1h-1zM428 683h1v1h-1zM430 683h1v1h-1zM427 684h1v1h-1zM429 684h1v1h-1zM427 685h1v1h-1zM429 685h1v1h-1z"/>
</svg>
<svg id="a" width="1024" height="768" viewBox="0 0 1024 768" xml:space="preserve">
<path fill="#ff9900" d="M517 1h9l-4.500 5z"/>
<path fill="#ff9900" d="M517.500 5.500h8v8l-1.500 2h-5l-1.500 -2z"/>
<path fill="#000" d="M518 6h7v2h-2.500v7h-2v-7h-2.500z"/>
<path fill="#ff9900" d="M516 17h11.500l-5.750 6z"/>
<path fill="#ff9900" d="M516 24h10l1 1v11l-5.500 3l-6.500 -3v-11z"/>
<path fill="#000" d="M516.500 25h10v2h-3.500v9h-3v-9h-3.500z"/>
<path fill="#ffff00" d="M1010 638.500l6.500 -5.500v5h4.500v1h-4.500v5z"/>
<path fill="#ffff00" d="M0 656l2 -2h10.500l7.500 8l-7.500 8.500h-10.500l-2 -2z"/>
<path fill="#c8c800" d="M0 668.500l2 2h10.500l1.500 -1.700h-12.500l-1.500 -1.500z"/>
<path fill="none" stroke="#ff66ff" stroke-width="1.300" d="M0.600 77l1.500 -1.500h10.400l7.300 8l-7.300 8h-10.400l-1.500 -1.500z"/>
<rect x="20.5" y="670.5" width="554" height="20" rx="5.5" fill="none" stroke="#f4f4f4" stroke-width="1"/>
<rect x="582.5" y="670.5" width="147" height="37" rx="5.5" fill="none" stroke="#f4f4f4" stroke-width="1"/>
<rect x="737.5" y="670.5" width="106" height="37" rx="5.5" fill="none" stroke="#f4f4f4" stroke-width="1"/>
<rect x="851.5" y="670.5" width="170" height="38" rx="5.5" fill="none" stroke="#f4f4f4" stroke-width="1"/>
<rect x="909.5" y="729.5" width="112" height="36" rx="5.5" fill="none" stroke="#f4f4f4" stroke-width="1"/>
<rect x="26" y="673" width="25" height="16" rx="8.0" fill="#ffff00"/>
<rect x="304" y="673" width="25" height="16" rx="8.0" fill="#a800a8"/>
<rect x="882" y="673" width="25" height="16" rx="8.0" fill="#ffff00"/>
<rect x="20" y="714" width="114" height="54" rx="3.500" fill="#686a66"/>
<rect x="20.5" y="714.300" width="113" height="2" rx="2" fill="#868686"/>
<rect x="22" y="716" width="110" height="50" rx="1.500" fill="#545652"/>
<rect x="22" y="766" width="110" height="2" fill="#7a7a7a"/>
<rect x="138" y="714" width="114" height="54" rx="3.500" fill="#686a66"/>
<rect x="138.5" y="714.300" width="113" height="2" rx="2" fill="#868686"/>
<rect x="140" y="716" width="110" height="50" rx="1.500" fill="#545652"/>
<rect x="140" y="766" width="110" height="2" fill="#7a7a7a"/>
<rect x="256" y="714" width="114" height="54" rx="3.500" fill="#686a66"/>
<rect x="256.5" y="714.300" width="113" height="2" rx="2" fill="#868686"/>
<rect x="258" y="716" width="110" height="50" rx="1.500" fill="#545652"/>
<rect x="258" y="766" width="110" height="2" fill="#7a7a7a"/>
<rect x="374" y="714" width="114" height="54" rx="3.500" fill="#686a66"/>
<rect x="374.5" y="714.300" width="113" height="2" rx="2" fill="#868686"/>
<rect x="376" y="716" width="110" height="50" rx="1.500" fill="#545652"/>
<rect x="376" y="766" width="110" height="2" fill="#7a7a7a"/>
<rect x="492" y="714" width="114" height="54" rx="3.500" fill="#686a66"/>
<rect x="492.5" y="714.300" width="113" height="2" rx="2" fill="#868686"/>
<rect x="494" y="716" width="110" height="50" rx="1.500" fill="#545652"/>
<rect x="494" y="766" width="110" height="2" fill="#7a7a7a"/>
<rect x="728" y="714" width="114" height="54" rx="3.500" fill="#686a66"/>
<rect x="728.5" y="714.300" width="113" height="2" rx="2" fill="#868686"/>
<rect x="730" y="716" width="110" height="50" rx="1.500" fill="#545652"/>
<rect x="730" y="766" width="110" height="2" fill="#7a7a7a"/>
<rect x="56" y="742" width="42" height="16" fill="#066aff"/>
<rect x="300" y="742" width="26" height="16" fill="#066aff"/>
<rect x="521" y="742" width="56" height="16" fill="#066aff"/>
<rect x="754" y="733" width="62" height="16" fill="#066aff"/>
<rect x="183" y="742" width="25" height="16" rx="8.0" fill="#ffff00"/>
<rect x="377.500" y="735.500" width="31" height="33" rx="2.500" fill="#066aff" stroke="#ccd8fa" stroke-width="1"/>
<path stroke="#fff" stroke-width="1" fill="none" d="M381 761.500h8l8 -19h8"/>
<path stroke="#fff" stroke-width="1" fill="none" d="M419 742.500h7.500l9.500 19h7.500"/>
<path stroke="#fff" stroke-width="1" fill="none" d="M457 742.500h7.500l9.500 19h7.500M457 761.500h7.500l9.500 -19h7.500"/>
<rect x="587" y="691" width="12" height="13" rx="1.800" fill="#ff9900"/>
<path fill="#000" d="M588 692.300h10v1.500h-4v9h-2.200v-9h-3.800z"/>
<path fill="#ff9900" d="M600 697h5v1h-5zM605 694l4.200 3.500l-4.200 3.500z"/>
<path fill="#ff9900" d="M610 694h11.200l-5.600 6.200z"/>
<path stroke="#fff" stroke-width="1.900" fill="none" d="M920 685h4.300l3.400 -9h4.300"/>
<text id="t1" y="13" font-size="16" fill="#fff"><tspan x="34.6" letter-spacing="0.92">Run</tspan></text>
<use href="#t1" x="0.4"/>
<text id="t2" y="13" font-size="16" fill="#fff"><tspan x="924.65" letter-spacing="0.79">Trig?</tspan></text>
<use href="#t2" x="0.4"/>
<text id="t3" y="686" font-size="16" fill="#ffff00"><tspan x="68.15" letter-spacing="0.94">5.00 </tspan><tspan x="108.7" letter-spacing="0">V</tspan></text>
<use href="#t3" x="0.4"/>
<text id="t4" y="686" font-size="16" fill="#c400c4"><tspan x="346.3" letter-spacing="0.74">100mV</tspan></text>
<use href="#t4" x="0.4"/>
<text id="t5" y="686" font-size="16" fill="#c400c4"><tspan x="407.35" letter-spacing="0">Ω</tspan></text>
<use href="#t5" x="0.4"/>
<text id="t6" y="686" font-size="16" fill="#fff"><tspan x="587.25" letter-spacing="1.37">4.00µs</tspan></text>
<use href="#t6" x="0.4"/>
<text id="t7" y="703" font-size="16" fill="#ff9900"><tspan x="622.2" letter-spacing="1.09">0.000000 </tspan><tspan x="702.6" letter-spacing="0">s</tspan></text>
<use href="#t7" x="0.4"/>
<text id="t8" y="686" font-size="16" fill="#fff"><tspan x="742.95" letter-spacing="0.7">2.50GS/s</tspan></text>
<use href="#t8" x="0.4"/>
<text id="t9" y="703" font-size="16" fill="#fff"><tspan x="743.15" letter-spacing="0.8">5M </tspan><tspan x="773.2" letter-spacing="1.45">points</tspan></text>
<use href="#t9" x="0.4"/>
<text id="t10" y="686" font-size="16" fill="#fff"><tspan x="965.8" letter-spacing="0.75">1.80 </tspan><tspan x="1006.05" letter-spacing="0">V</tspan></text>
<use href="#t10" x="0.4"/>
<text id="t11" y="738" font-size="16" fill="#fff"><tspan x="57.35" letter-spacing="1.21">Type</tspan></text>
<use href="#t11" x="0.4"/>
<text id="t12" y="755" font-size="16" fill="#fff" transform="scale(0.94,1)"><tspan x="62.21" letter-spacing="0.76">Edge</tspan></text>
<use href="#t12" x="0.4"/>
<text id="t13" y="738" font-size="16" fill="#fff"><tspan x="168.05" letter-spacing="0.59">Source</tspan></text>
<use href="#t13" x="0.4"/>
<text id="t14" y="738" font-size="16" fill="#fff"><tspan x="277.0" letter-spacing="1.42">Coupling</tspan></text>
<use href="#t14" x="0.4"/>
<text id="t15" y="755" font-size="16" fill="#fff" transform="scale(0.88,1)"><tspan x="344.04" letter-spacing="1.41">DC</tspan></text>
<use href="#t15" x="0.4"/>
<text id="t16" y="730" font-size="16" fill="#fff"><tspan x="409.05" letter-spacing="0.68">Slope</tspan></text>
<use href="#t16" x="0.4"/>
<text id="t17" y="738" font-size="16" fill="#fff"><tspan x="529.1" letter-spacing="0.73">Level</tspan></text>
<use href="#t17" x="0.4"/>
<text id="t18" y="755" font-size="16" fill="#fff"><tspan x="524.7" letter-spacing="0.75">1.80 </tspan><tspan x="564.95" letter-spacing="0">V</tspan></text>
<use href="#t18" x="0.4"/>
<text id="t19" y="729" font-size="16" fill="#fff"><tspan x="763.1" letter-spacing="1.16">Mode</tspan></text>
<use href="#t19" x="0.4"/>
<text id="t20" y="746" font-size="16" fill="#fff"><tspan x="756.1" letter-spacing="1.24">Normal</tspan></text>
<use href="#t20" x="0.4"/>
<text id="t21" y="763" font-size="16" fill="#fff"><tspan x="747.15" letter-spacing="0">&amp; </tspan><tspan x="764.5" letter-spacing="1.38">Holdoff</tspan></text>
<use href="#t21" x="0.4"/>
<text id="t22" y="746" font-size="16" fill="#fff"><tspan x="915.1" letter-spacing="0.15">13 </tspan><tspan x="940.5" letter-spacing="0.71">Apr </tspan><tspan x="978.0" letter-spacing="0.92">2024</tspan></text>
<use href="#t22" x="0.4"/>
<text id="t23" y="762" font-size="16" fill="#fff"><tspan x="915.1" letter-spacing="1.23">15:06:52</tspan></text>
<use href="#t23" x="0.4"/>
<path fill="#000" d="M38 675h2v11h-2zM36 676.2l2 -0.700v1.500l-2 0.300z"/>
<path fill="#000" d="M894 675h2v11h-2zM892 676.2l2 -0.700v1.500l-2 0.300z"/>
<path fill="#000" d="M195 744h2v11h-2zM193 745.2l2 -0.700v1.500l-2 0.300z"/>
<path fill="#000" d="M7 657h2v11h-2zM5 658.2l2 -0.700v1.500l-2 0.300z"/>
<text id="t24" y="686" font-size="16" fill="#000"><tspan x="312.4" letter-spacing="0">3</tspan></text>
<use href="#t24" x="0.7"/>
<text id="t25" y="89" font-size="16" fill="#c800c8"><tspan x="3.4" letter-spacing="0">3</tspan></text>
<text id="tek" x="-1" y="15" style="font-family:'Liberation Serif',serif;font-weight:bold" font-size="21" textLength="31.700" lengthAdjust="spacingAndGlyphs" fill="#f4f4ff">Tek</text><use href="#tek" x="0.600"/>
</svg>
</body></html>
